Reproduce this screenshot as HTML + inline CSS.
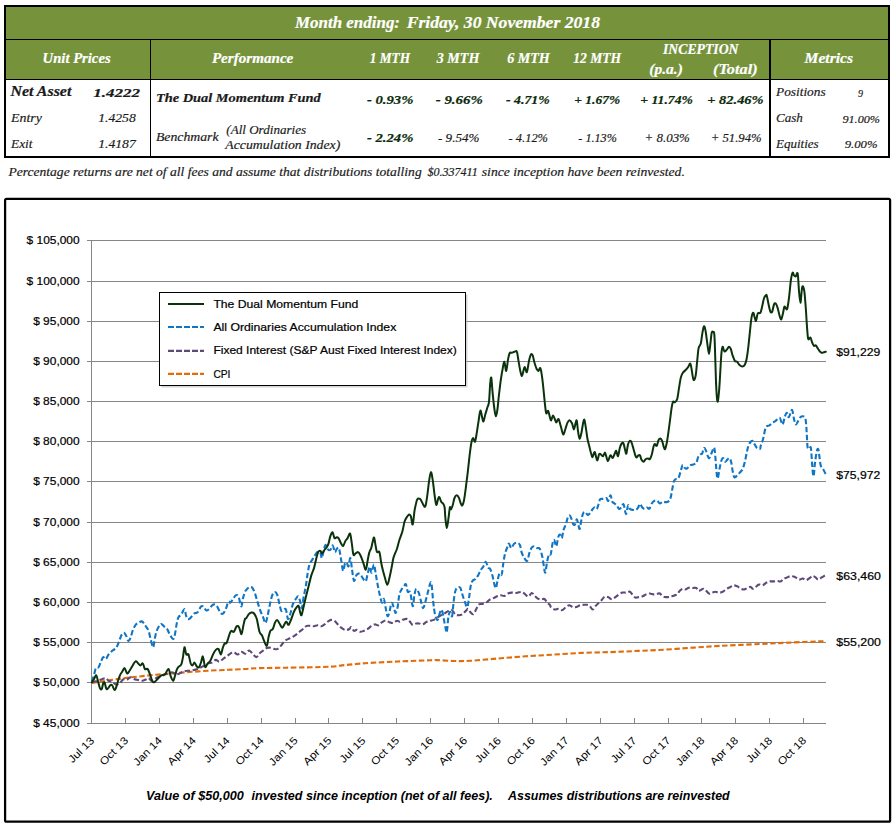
<!DOCTYPE html>
<html><head><meta charset="utf-8"><title>Fund Performance</title>
<style>
html,body{margin:0;padding:0;background:#fff;}
body{width:895px;height:826px;overflow:hidden;font-family:"Liberation Sans",sans-serif;}
svg{display:block;}
.se{font-family:"Liberation Serif",serif;font-style:italic;}
.sa{font-family:"Liberation Sans",sans-serif;}
.b{font-weight:bold;}
</style></head><body>
<svg width="895" height="826" viewBox="0 0 895 826">
<rect x="0" y="0" width="895" height="826" fill="#ffffff"/>
<g id="table" shape-rendering="crispEdges">
<rect x="5" y="6" width="884" height="151" fill="#ffffff"/>
<rect x="5" y="6" width="884" height="73.5" fill="#76933C"/>
<rect x="5" y="6" width="884" height="151" fill="none" stroke="#000" stroke-width="2"/>
<rect x="5" y="38.7" width="884" height="1.4" fill="#000"/>
<rect x="5" y="78.7" width="884" height="1.4" fill="#000"/>
<rect x="150" y="39" width="1.3" height="118" fill="#000"/>
<rect x="769.2" y="39" width="1.8" height="118" fill="#000"/>
</g>
<g id="tabletext">
<text class="se b" x="295.0" y="27.5" font-size="16" fill="#ffffff" stroke="#ffffff" stroke-width="0.2" textLength="105.0" lengthAdjust="spacingAndGlyphs" xml:space="preserve">Month ending:</text>
<text class="se b" x="406.7" y="27.5" font-size="16" fill="#ffffff" stroke="#ffffff" stroke-width="0.2" textLength="193.3" lengthAdjust="spacingAndGlyphs" xml:space="preserve">Friday, 30 November 2018</text>
<text class="se b" x="42.6" y="63.0" font-size="14.5" fill="#ffffff" stroke="#ffffff" stroke-width="0.2" textLength="68.0" lengthAdjust="spacingAndGlyphs" xml:space="preserve">Unit Prices</text>
<text class="se b" x="211.9" y="63.0" font-size="14.5" fill="#ffffff" stroke="#ffffff" stroke-width="0.2" textLength="81.4" lengthAdjust="spacingAndGlyphs" xml:space="preserve">Performance</text>
<text class="se b" x="369.8" y="63.0" font-size="14.5" fill="#ffffff" stroke="#ffffff" stroke-width="0.2" textLength="40.2" lengthAdjust="spacingAndGlyphs" xml:space="preserve">1 MTH</text>
<text class="se b" x="436.8" y="63.0" font-size="14.5" fill="#ffffff" stroke="#ffffff" stroke-width="0.2" textLength="42.6" lengthAdjust="spacingAndGlyphs" xml:space="preserve">3 MTH</text>
<text class="se b" x="507.2" y="63.0" font-size="14.5" fill="#ffffff" stroke="#ffffff" stroke-width="0.2" textLength="42.6" lengthAdjust="spacingAndGlyphs" xml:space="preserve">6 MTH</text>
<text class="se b" x="573.3" y="63.0" font-size="14.5" fill="#ffffff" stroke="#ffffff" stroke-width="0.2" textLength="47.8" lengthAdjust="spacingAndGlyphs" xml:space="preserve">12 MTH</text>
<text class="se b" x="663.0" y="53.6" font-size="14.5" fill="#ffffff" stroke="#ffffff" stroke-width="0.2" textLength="75.5" lengthAdjust="spacingAndGlyphs" xml:space="preserve">INCEPTION</text>
<text class="se b" x="649.3" y="73.7" font-size="14.5" fill="#ffffff" stroke="#ffffff" stroke-width="0.2" textLength="33.5" lengthAdjust="spacingAndGlyphs" xml:space="preserve">(p.a.)</text>
<text class="se b" x="713.0" y="73.7" font-size="14.5" fill="#ffffff" stroke="#ffffff" stroke-width="0.2" textLength="44.6" lengthAdjust="spacingAndGlyphs" xml:space="preserve">(Total)</text>
<text class="se b" x="804.5" y="63.0" font-size="14.5" fill="#ffffff" stroke="#ffffff" stroke-width="0.2" textLength="48.6" lengthAdjust="spacingAndGlyphs" xml:space="preserve">Metrics</text>
<text class="se b" x="10.4" y="96.2" font-size="14" fill="#1a1a1a" stroke="#1a1a1a" stroke-width="0.2" textLength="61.0" lengthAdjust="spacingAndGlyphs" xml:space="preserve">Net Asset</text>
<text class="se b" x="93.2" y="96.7" font-size="12.6" fill="#1a1a1a" stroke="#1a1a1a" stroke-width="0.2" textLength="46.8" lengthAdjust="spacingAndGlyphs" xml:space="preserve">1.4222</text>
<text class="se" x="11.0" y="121.8" font-size="13.5" fill="#1a1a1a" stroke="#1a1a1a" stroke-width="0.18" textLength="30.9" lengthAdjust="spacingAndGlyphs" xml:space="preserve">Entry</text>
<text class="se" x="98.2" y="122.3" font-size="12.2" fill="#1a1a1a" stroke="#1a1a1a" stroke-width="0.18" textLength="37.6" lengthAdjust="spacingAndGlyphs" xml:space="preserve">1.4258</text>
<text class="se" x="11.0" y="147.8" font-size="13.5" fill="#1a1a1a" stroke="#1a1a1a" stroke-width="0.18" textLength="21.5" lengthAdjust="spacingAndGlyphs" xml:space="preserve">Exit</text>
<text class="se" x="98.2" y="148.3" font-size="12.2" fill="#1a1a1a" stroke="#1a1a1a" stroke-width="0.18" textLength="37.6" lengthAdjust="spacingAndGlyphs" xml:space="preserve">1.4187</text>
<text class="se b" x="155.9" y="102.2" font-size="13.5" fill="#1a1a1a" stroke="#1a1a1a" stroke-width="0.2" textLength="164.9" lengthAdjust="spacingAndGlyphs" xml:space="preserve">The Dual Momentum Fund</text>
<text class="se" x="155.9" y="140.8" font-size="13" fill="#1a1a1a" stroke="#1a1a1a" stroke-width="0.18" textLength="62.7" lengthAdjust="spacingAndGlyphs" xml:space="preserve">Benchmark</text>
<text class="se" x="226.3" y="133.6" font-size="12.5" fill="#1a1a1a" stroke="#1a1a1a" stroke-width="0.18" textLength="79.8" lengthAdjust="spacingAndGlyphs" xml:space="preserve">(All Ordinaries</text>
<text class="se" x="225.3" y="148.5" font-size="12.5" fill="#1a1a1a" stroke="#1a1a1a" stroke-width="0.18" textLength="115.0" lengthAdjust="spacingAndGlyphs" xml:space="preserve">Accumulation Index)</text>
<text class="se b" x="367.0" y="103.5" font-size="12.6" fill="#0c2b0c" stroke="#0c2b0c" stroke-width="0.2" textLength="46.4" lengthAdjust="spacingAndGlyphs" xml:space="preserve">- 0.93%</text>
<text class="se b" x="435.8" y="103.5" font-size="12.6" fill="#0c2b0c" stroke="#0c2b0c" stroke-width="0.2" textLength="47.0" lengthAdjust="spacingAndGlyphs" xml:space="preserve">- 9.66%</text>
<text class="se b" x="506.0" y="103.5" font-size="12.6" fill="#0c2b0c" stroke="#0c2b0c" stroke-width="0.2" textLength="43.8" lengthAdjust="spacingAndGlyphs" xml:space="preserve">- 4.71%</text>
<text class="se b" x="574.3" y="103.5" font-size="12.6" fill="#0c2b0c" stroke="#0c2b0c" stroke-width="0.2" textLength="45.8" lengthAdjust="spacingAndGlyphs" xml:space="preserve">+ 1.67%</text>
<text class="se b" x="640.3" y="103.5" font-size="12.6" fill="#0c2b0c" stroke="#0c2b0c" stroke-width="0.2" textLength="52.6" lengthAdjust="spacingAndGlyphs" xml:space="preserve">+ 11.74%</text>
<text class="se b" x="707.3" y="103.5" font-size="12.6" fill="#0c2b0c" stroke="#0c2b0c" stroke-width="0.2" textLength="56.3" lengthAdjust="spacingAndGlyphs" xml:space="preserve">+ 82.46%</text>
<text class="se b" x="367.0" y="142.0" font-size="12.6" fill="#0c2b0c" stroke="#0c2b0c" stroke-width="0.2" textLength="46.4" lengthAdjust="spacingAndGlyphs" xml:space="preserve">- 2.24%</text>
<text class="se" x="438.0" y="142.0" font-size="12.2" fill="#1a1a1a" stroke="#1a1a1a" stroke-width="0.18" textLength="41.4" lengthAdjust="spacingAndGlyphs" xml:space="preserve">- 9.54%</text>
<text class="se" x="508.6" y="142.0" font-size="12.2" fill="#1a1a1a" stroke="#1a1a1a" stroke-width="0.18" textLength="39.4" lengthAdjust="spacingAndGlyphs" xml:space="preserve">- 4.12%</text>
<text class="se" x="578.3" y="142.0" font-size="12.2" fill="#1a1a1a" stroke="#1a1a1a" stroke-width="0.18" textLength="38.5" lengthAdjust="spacingAndGlyphs" xml:space="preserve">- 1.13%</text>
<text class="se" x="644.6" y="142.0" font-size="12.2" fill="#1a1a1a" stroke="#1a1a1a" stroke-width="0.18" textLength="45.3" lengthAdjust="spacingAndGlyphs" xml:space="preserve">+ 8.03%</text>
<text class="se" x="710.7" y="142.0" font-size="12.2" fill="#1a1a1a" stroke="#1a1a1a" stroke-width="0.18" textLength="50.9" lengthAdjust="spacingAndGlyphs" xml:space="preserve">+ 51.94%</text>
<text class="se" x="776.0" y="96.2" font-size="12.5" fill="#1a1a1a" stroke="#1a1a1a" stroke-width="0.18" textLength="49.6" lengthAdjust="spacingAndGlyphs" xml:space="preserve">Positions</text>
<text class="se" x="858.0" y="96.7" font-size="11.2" fill="#1a1a1a" stroke="#1a1a1a" stroke-width="0.18" textLength="5.0" lengthAdjust="spacingAndGlyphs" xml:space="preserve">9</text>
<text class="se" x="776.0" y="122.4" font-size="12.5" fill="#1a1a1a" stroke="#1a1a1a" stroke-width="0.18" textLength="26.8" lengthAdjust="spacingAndGlyphs" xml:space="preserve">Cash</text>
<text class="se" x="842.4" y="122.9" font-size="11.2" fill="#1a1a1a" stroke="#1a1a1a" stroke-width="0.18" textLength="37.6" lengthAdjust="spacingAndGlyphs" xml:space="preserve">91.00%</text>
<text class="se" x="776.0" y="147.6" font-size="12.5" fill="#1a1a1a" stroke="#1a1a1a" stroke-width="0.18" textLength="42.6" lengthAdjust="spacingAndGlyphs" xml:space="preserve">Equities</text>
<text class="se" x="844.7" y="148.1" font-size="11.2" fill="#1a1a1a" stroke="#1a1a1a" stroke-width="0.18" textLength="32.9" lengthAdjust="spacingAndGlyphs" xml:space="preserve">9.00%</text>
<text class="se" x="8.4" y="176.0" font-size="12.5" fill="#1a1a1a" stroke="#1a1a1a" stroke-width="0.18" textLength="413.3" lengthAdjust="spacingAndGlyphs" xml:space="preserve">Percentage returns are net of all fees and assume that distributions totalling</text>
<text class="se" x="427.4" y="176.0" font-size="11.5" fill="#1a1a1a" stroke="#1a1a1a" stroke-width="0.18" textLength="50.3" lengthAdjust="spacingAndGlyphs" xml:space="preserve">$0.337411</text>
<text class="se" x="481.8" y="176.0" font-size="12.5" fill="#1a1a1a" stroke="#1a1a1a" stroke-width="0.18" textLength="203.0" lengthAdjust="spacingAndGlyphs" xml:space="preserve">since inception have been reinvested.</text>
</g>
<g id="chart">
<rect x="5.1" y="198.8" width="885" height="622.9" rx="1.5" fill="#fff" stroke="#000" stroke-width="2.25"/>
<g stroke="#868686" stroke-width="1" shape-rendering="crispEdges">
<line x1="87.1" y1="723.5" x2="826.0" y2="723.5"/>
<line x1="87.1" y1="682.5" x2="826.0" y2="682.5"/>
<line x1="87.1" y1="642.5" x2="826.0" y2="642.5"/>
<line x1="87.1" y1="602.5" x2="826.0" y2="602.5"/>
<line x1="87.1" y1="562.5" x2="826.0" y2="562.5"/>
<line x1="87.1" y1="522.5" x2="826.0" y2="522.5"/>
<line x1="87.1" y1="481.5" x2="826.0" y2="481.5"/>
<line x1="87.1" y1="441.5" x2="826.0" y2="441.5"/>
<line x1="87.1" y1="401.5" x2="826.0" y2="401.5"/>
<line x1="87.1" y1="361.5" x2="826.0" y2="361.5"/>
<line x1="87.1" y1="321.5" x2="826.0" y2="321.5"/>
<line x1="87.1" y1="281.5" x2="826.0" y2="281.5"/>
<line x1="87.1" y1="240.5" x2="826.0" y2="240.5"/>
<line x1="91.6" y1="240.5" x2="91.6" y2="723.5"/>
<line x1="125.5" y1="718.0" x2="125.5" y2="723.5"/>
<line x1="159.5" y1="718.0" x2="159.5" y2="723.5"/>
<line x1="193.5" y1="718.0" x2="193.5" y2="723.5"/>
<line x1="227.5" y1="718.0" x2="227.5" y2="723.5"/>
<line x1="261.5" y1="718.0" x2="261.5" y2="723.5"/>
<line x1="295.5" y1="718.0" x2="295.5" y2="723.5"/>
<line x1="328.5" y1="718.0" x2="328.5" y2="723.5"/>
<line x1="362.5" y1="718.0" x2="362.5" y2="723.5"/>
<line x1="396.5" y1="718.0" x2="396.5" y2="723.5"/>
<line x1="430.5" y1="718.0" x2="430.5" y2="723.5"/>
<line x1="464.5" y1="718.0" x2="464.5" y2="723.5"/>
<line x1="498.5" y1="718.0" x2="498.5" y2="723.5"/>
<line x1="532.5" y1="718.0" x2="532.5" y2="723.5"/>
<line x1="566.5" y1="718.0" x2="566.5" y2="723.5"/>
<line x1="600.5" y1="718.0" x2="600.5" y2="723.5"/>
<line x1="634.5" y1="718.0" x2="634.5" y2="723.5"/>
<line x1="668.5" y1="718.0" x2="668.5" y2="723.5"/>
<line x1="701.5" y1="718.0" x2="701.5" y2="723.5"/>
<line x1="735.5" y1="718.0" x2="735.5" y2="723.5"/>
<line x1="769.5" y1="718.0" x2="769.5" y2="723.5"/>
<line x1="803.5" y1="718.0" x2="803.5" y2="723.5"/>
</g>
<text class="sa" x="33.2" y="727.2" font-size="10.6" fill="#000" stroke="#000" stroke-width="0.2" textLength="46.4" lengthAdjust="spacingAndGlyphs" xml:space="preserve">$ 45,000</text>
<text class="sa" x="33.2" y="686.2" font-size="10.6" fill="#000" stroke="#000" stroke-width="0.2" textLength="46.4" lengthAdjust="spacingAndGlyphs" xml:space="preserve">$ 50,000</text>
<text class="sa" x="33.2" y="646.2" font-size="10.6" fill="#000" stroke="#000" stroke-width="0.2" textLength="46.4" lengthAdjust="spacingAndGlyphs" xml:space="preserve">$ 55,000</text>
<text class="sa" x="33.2" y="606.2" font-size="10.6" fill="#000" stroke="#000" stroke-width="0.2" textLength="46.4" lengthAdjust="spacingAndGlyphs" xml:space="preserve">$ 60,000</text>
<text class="sa" x="33.2" y="566.2" font-size="10.6" fill="#000" stroke="#000" stroke-width="0.2" textLength="46.4" lengthAdjust="spacingAndGlyphs" xml:space="preserve">$ 65,000</text>
<text class="sa" x="33.2" y="526.2" font-size="10.6" fill="#000" stroke="#000" stroke-width="0.2" textLength="46.4" lengthAdjust="spacingAndGlyphs" xml:space="preserve">$ 70,000</text>
<text class="sa" x="33.2" y="485.2" font-size="10.6" fill="#000" stroke="#000" stroke-width="0.2" textLength="46.4" lengthAdjust="spacingAndGlyphs" xml:space="preserve">$ 75,000</text>
<text class="sa" x="33.2" y="445.2" font-size="10.6" fill="#000" stroke="#000" stroke-width="0.2" textLength="46.4" lengthAdjust="spacingAndGlyphs" xml:space="preserve">$ 80,000</text>
<text class="sa" x="33.2" y="405.2" font-size="10.6" fill="#000" stroke="#000" stroke-width="0.2" textLength="46.4" lengthAdjust="spacingAndGlyphs" xml:space="preserve">$ 85,000</text>
<text class="sa" x="33.2" y="365.2" font-size="10.6" fill="#000" stroke="#000" stroke-width="0.2" textLength="46.4" lengthAdjust="spacingAndGlyphs" xml:space="preserve">$ 90,000</text>
<text class="sa" x="33.2" y="325.2" font-size="10.6" fill="#000" stroke="#000" stroke-width="0.2" textLength="46.4" lengthAdjust="spacingAndGlyphs" xml:space="preserve">$ 95,000</text>
<text class="sa" x="26.6" y="285.2" font-size="10.6" fill="#000" stroke="#000" stroke-width="0.2" textLength="53.0" lengthAdjust="spacingAndGlyphs" xml:space="preserve">$ 100,000</text>
<text class="sa" x="26.6" y="244.2" font-size="10.6" fill="#000" stroke="#000" stroke-width="0.2" textLength="53.0" lengthAdjust="spacingAndGlyphs" xml:space="preserve">$ 105,000</text>
<g class="sa" font-size="10.6" fill="#000" text-anchor="end">
<text transform="translate(94.9,741.2) rotate(-45) scale(1.12,1)">Jul 13</text>
<text transform="translate(128.8,741.2) rotate(-45) scale(1.12,1)">Oct 13</text>
<text transform="translate(162.7,741.2) rotate(-45) scale(1.12,1)">Jan 14</text>
<text transform="translate(196.6,741.2) rotate(-45) scale(1.12,1)">Apr 14</text>
<text transform="translate(230.5,741.2) rotate(-45) scale(1.12,1)">Jul 14</text>
<text transform="translate(264.4,741.2) rotate(-45) scale(1.12,1)">Oct 14</text>
<text transform="translate(298.3,741.2) rotate(-45) scale(1.12,1)">Jan 15</text>
<text transform="translate(332.2,741.2) rotate(-45) scale(1.12,1)">Apr 15</text>
<text transform="translate(366.1,741.2) rotate(-45) scale(1.12,1)">Jul 15</text>
<text transform="translate(400.0,741.2) rotate(-45) scale(1.12,1)">Oct 15</text>
<text transform="translate(433.9,741.2) rotate(-45) scale(1.12,1)">Jan 16</text>
<text transform="translate(467.8,741.2) rotate(-45) scale(1.12,1)">Apr 16</text>
<text transform="translate(501.7,741.2) rotate(-45) scale(1.12,1)">Jul 16</text>
<text transform="translate(535.6,741.2) rotate(-45) scale(1.12,1)">Oct 16</text>
<text transform="translate(569.5,741.2) rotate(-45) scale(1.12,1)">Jan 17</text>
<text transform="translate(603.4,741.2) rotate(-45) scale(1.12,1)">Apr 17</text>
<text transform="translate(637.3,741.2) rotate(-45) scale(1.12,1)">Jul 17</text>
<text transform="translate(671.2,741.2) rotate(-45) scale(1.12,1)">Oct 17</text>
<text transform="translate(705.1,741.2) rotate(-45) scale(1.12,1)">Jan 18</text>
<text transform="translate(739.0,741.2) rotate(-45) scale(1.12,1)">Apr 18</text>
<text transform="translate(772.9,741.2) rotate(-45) scale(1.12,1)">Jul 18</text>
<text transform="translate(806.8,741.2) rotate(-45) scale(1.12,1)">Oct 18</text>
</g>
<path d="M91.8,683.0 C93.7,682.7 98.1,682.0 103.0,681.3 C107.9,680.6 115.1,679.4 121.0,678.6 C126.9,677.8 132.7,677.1 138.6,676.5 C144.5,675.9 150.5,675.2 156.5,674.7 C162.5,674.2 168.4,673.7 174.4,673.2 C180.4,672.7 186.4,672.2 192.3,671.8 C198.2,671.4 204.1,670.9 210.0,670.6 C215.9,670.3 222.2,670.1 228.0,669.8 C233.8,669.5 240.0,669.3 245.0,669.0 C250.0,668.7 251.2,668.4 258.0,668.2 C264.8,668.0 274.3,667.9 286.0,667.7 C297.7,667.5 318.7,667.2 328.0,666.8 C337.3,666.4 337.3,665.9 342.0,665.4 C346.7,664.9 351.3,664.4 356.0,664.0 C360.7,663.6 363.0,663.3 370.0,662.9 C377.0,662.5 388.8,661.9 398.0,661.5 C407.2,661.1 419.0,660.6 425.5,660.4 C432.0,660.2 432.3,660.0 437.0,660.1 C441.7,660.2 448.0,660.9 453.5,661.0 C459.0,661.1 462.6,661.2 470.0,660.8 C477.4,660.4 488.7,659.2 498.0,658.5 C507.3,657.8 516.7,656.9 526.0,656.3 C535.3,655.6 544.7,655.2 554.0,654.6 C563.3,654.0 572.7,653.3 582.0,652.9 C591.3,652.5 600.7,652.4 610.0,652.1 C619.3,651.8 628.8,651.3 638.0,650.9 C647.2,650.5 656.2,650.1 665.5,649.6 C674.8,649.1 684.4,648.2 693.5,647.6 C702.6,647.0 708.9,646.5 720.0,645.9 C731.1,645.3 748.3,644.5 760.0,644.0 C771.7,643.5 779.4,643.1 790.0,642.6 C800.6,642.1 817.9,641.4 823.5,641.2" fill="none" stroke="#E36C09" stroke-width="2.1" stroke-dasharray="5.4 2.6" stroke-linejoin="round"/>
<path d="M91.9,682.6 C92.6,682.4 94.3,681.8 95.9,681.3 C97.5,680.8 99.6,680.0 101.3,679.5 C103.0,679.0 104.7,677.9 105.9,678.1 C107.1,678.3 107.5,680.2 108.6,680.8 C109.6,681.4 111.0,681.1 112.2,681.7 C113.4,682.3 114.7,684.1 115.9,684.4 C117.1,684.7 118.3,684.3 119.5,683.5 C120.7,682.7 121.9,680.1 123.1,679.5 C124.3,678.9 125.6,680.3 126.8,679.9 C128.0,679.5 129.2,677.4 130.4,677.2 C131.6,677.1 132.8,678.5 134.0,679.0 C135.2,679.5 136.3,679.6 137.7,679.9 C139.1,680.2 140.8,680.9 142.2,680.8 C143.5,680.7 144.7,680.0 145.8,679.5 C146.9,679.0 147.7,677.9 148.6,678.1 C149.5,678.3 150.4,680.6 151.3,680.8 C152.2,681.0 152.9,680.1 154.0,679.5 C155.1,678.9 156.4,677.7 157.6,677.2 C158.8,676.7 160.1,676.8 161.3,676.3 C162.5,675.8 163.7,674.9 164.9,674.4 C166.1,673.9 167.3,673.9 168.5,673.5 C169.7,673.1 171.0,672.1 172.2,672.3 C173.4,672.4 174.6,674.2 175.8,674.4 C177.0,674.6 178.2,674.0 179.4,673.5 C180.6,673.0 181.9,672.2 183.1,671.7 C184.3,671.2 185.5,670.9 186.7,670.8 C187.9,670.6 189.1,670.9 190.3,670.8 C191.5,670.6 192.8,670.2 194.0,669.9 C195.2,669.6 196.4,669.5 197.6,669.0 C198.8,668.5 200.0,667.8 201.2,667.2 C202.4,666.6 203.7,666.1 204.9,665.4 C206.1,664.7 207.3,663.7 208.5,663.2 C209.7,662.7 210.9,663.2 212.1,662.6 C213.3,662.0 214.6,660.0 215.8,659.9 C217.0,659.8 218.2,661.9 219.4,661.7 C220.6,661.6 221.8,659.9 223.0,659.0 C224.2,658.1 225.5,657.2 226.7,656.3 C227.9,655.4 229.1,654.3 230.3,653.6 C231.5,652.9 232.7,652.1 233.9,652.3 C235.1,652.4 236.4,654.6 237.6,654.5 C238.8,654.4 240.0,651.9 241.2,651.7 C242.4,651.6 244.2,653.5 245.0,653.6 C245.8,653.8 245.2,653.1 245.9,652.6 C246.7,652.1 248.3,650.4 249.5,650.7 C250.7,651.0 252.0,653.3 253.2,654.4 C254.3,655.5 255.3,657.2 256.4,657.1 C257.4,657.0 258.4,654.6 259.5,653.5 C260.6,652.4 261.9,651.6 263.1,650.7 C264.3,649.8 265.6,648.5 266.8,648.0 C268.0,647.5 269.2,647.6 270.4,647.7 C271.6,647.9 272.8,648.7 274.0,648.9 C275.2,649.1 276.5,649.5 277.7,648.9 C278.9,648.3 280.1,646.6 281.3,645.3 C282.5,643.9 283.7,641.9 284.9,640.8 C286.1,639.7 287.4,639.5 288.6,638.9 C289.8,638.3 291.0,637.8 292.2,637.1 C293.4,636.4 294.6,635.8 295.8,634.9 C297.0,634.0 298.3,632.7 299.5,631.7 C300.7,630.7 301.9,630.0 303.1,629.0 C304.3,628.0 305.5,626.4 306.7,625.9 C307.9,625.4 309.2,625.8 310.4,625.9 C311.6,626.0 312.8,626.3 314.0,626.2 C315.2,626.1 316.4,625.3 317.6,625.3 C318.8,625.3 320.1,626.4 321.3,626.2 C322.5,626.0 323.7,625.0 324.9,624.1 C326.1,623.2 327.4,621.8 328.5,621.1 C329.6,620.4 330.2,619.9 331.3,619.9 C332.4,619.9 333.7,620.2 334.9,621.1 C336.1,622.0 337.3,624.1 338.5,625.3 C339.7,626.5 341.0,627.6 342.2,628.4 C343.4,629.2 344.6,630.1 345.8,630.2 C347.0,630.3 348.5,629.5 349.4,629.0 C350.3,628.5 350.4,626.8 351.2,627.1 C352.0,627.4 353.1,630.3 354.0,630.8 C354.9,631.3 355.6,629.8 356.7,629.9 C357.8,630.0 359.1,631.6 360.3,631.7 C361.5,631.9 362.7,631.2 363.9,630.8 C365.1,630.3 366.4,629.8 367.6,629.0 C368.8,628.2 370.0,627.0 371.2,626.2 C372.4,625.4 373.6,624.5 374.8,624.4 C376.0,624.2 377.3,625.7 378.5,625.3 C379.7,624.9 380.9,623.0 382.1,622.2 C383.3,621.4 384.5,620.4 385.7,620.4 C386.9,620.4 388.2,621.8 389.4,622.2 C390.6,622.6 392.1,623.1 393.0,623.0 C393.9,622.9 394.3,622.1 395.0,621.7 C395.7,621.3 396.5,620.8 397.3,620.8 C398.1,620.8 398.9,621.9 400.0,621.7 C401.1,621.5 402.4,620.0 403.6,619.5 C404.8,619.0 406.2,618.6 407.3,619.0 C408.4,619.4 409.1,620.7 410.0,621.7 C410.9,622.7 411.6,624.6 412.7,624.9 C413.8,625.2 415.2,623.7 416.3,623.5 C417.4,623.3 418.0,623.4 419.1,623.5 C420.2,623.6 421.5,624.6 422.7,624.4 C423.9,624.1 425.1,622.6 426.3,622.0 C427.5,621.4 428.8,621.1 430.0,620.8 C431.2,620.4 432.4,620.4 433.6,619.9 C434.8,619.4 436.0,618.5 437.2,617.7 C438.4,616.9 439.7,616.0 440.9,615.3 C442.1,614.6 443.3,614.2 444.5,613.5 C445.7,612.8 446.9,611.7 448.1,611.1 C449.3,610.5 450.5,609.4 451.7,609.9 C452.9,610.4 454.2,613.5 455.4,614.4 C456.6,615.3 457.8,615.3 459.0,615.3 C460.2,615.2 461.4,614.9 462.6,614.1 C463.8,613.3 465.4,611.2 466.3,610.4 C467.2,609.5 467.4,608.6 468.1,609.0 C468.9,609.4 469.9,611.8 470.8,612.6 C471.7,613.5 472.6,614.7 473.5,614.1 C474.4,613.5 475.4,610.6 476.3,609.0 C477.2,607.4 477.9,605.2 479.0,604.4 C480.1,603.5 481.4,604.2 482.6,603.9 C483.8,603.6 485.1,603.3 486.3,602.6 C487.5,601.9 488.7,600.2 489.9,599.5 C491.1,598.8 492.3,598.6 493.5,598.1 C494.7,597.6 496.0,596.8 497.2,596.3 C498.4,595.8 499.6,595.4 500.8,595.3 C502.0,595.2 503.2,596.2 504.4,595.9 C505.6,595.6 506.8,594.0 508.0,593.5 C509.2,593.0 510.5,592.7 511.7,592.6 C512.9,592.5 514.1,593.0 515.3,593.0 C516.5,593.0 517.7,592.4 518.9,592.3 C520.1,592.2 521.4,591.8 522.6,592.3 C523.8,592.8 525.2,594.6 526.2,595.3 C527.2,596.0 528.0,596.7 528.9,596.3 C529.8,595.9 530.8,593.2 531.7,593.0 C532.6,592.8 533.5,594.4 534.4,595.3 C535.3,596.1 536.0,597.4 537.1,598.1 C538.2,598.8 539.5,599.4 540.7,599.5 C541.9,599.6 543.3,598.5 544.4,599.0 C545.5,599.5 546.2,601.6 547.1,602.6 C548.0,603.6 549.4,604.2 550.0,605.0 C550.6,605.8 550.1,606.4 550.9,607.1 C551.6,607.9 553.3,609.2 554.5,609.5 C555.7,609.8 557.0,608.8 558.2,608.9 C559.4,609.0 560.6,610.4 561.8,610.2 C563.0,610.0 564.2,608.5 565.4,607.7 C566.6,606.9 567.9,605.4 569.1,605.3 C570.3,605.2 571.5,606.8 572.7,607.1 C573.9,607.4 575.1,607.4 576.3,607.1 C577.5,606.8 578.8,605.7 580.0,605.3 C581.2,604.9 582.4,604.9 583.6,604.8 C584.8,604.7 586.2,604.6 587.2,604.8 C588.2,605.0 589.0,605.4 589.9,606.2 C590.8,607.0 591.8,609.5 592.7,609.5 C593.6,609.5 594.5,607.2 595.4,606.2 C596.3,605.2 597.0,604.5 598.1,603.5 C599.2,602.5 600.6,601.0 601.7,599.9 C602.8,598.8 603.4,597.3 604.5,596.8 C605.6,596.3 606.9,596.7 608.1,597.1 C609.3,597.5 610.5,599.3 611.7,599.3 C612.9,599.3 614.2,597.9 615.4,597.1 C616.6,596.3 617.8,595.1 619.0,594.4 C620.2,593.6 621.4,592.9 622.6,592.6 C623.8,592.3 625.1,592.8 626.3,592.6 C627.5,592.5 628.8,591.3 629.9,591.7 C631.0,592.1 631.7,593.9 632.6,594.9 C633.5,595.9 634.2,597.1 635.3,597.5 C636.4,597.9 637.8,597.3 639.0,597.1 C640.2,596.9 641.4,596.7 642.6,596.2 C643.8,595.8 645.0,594.9 646.2,594.4 C647.4,593.9 648.7,593.5 649.9,593.5 C651.1,593.5 652.3,594.3 653.5,594.4 C654.7,594.5 656.0,594.0 657.1,593.9 C658.2,593.8 659.0,593.1 659.9,593.5 C660.8,593.9 661.5,595.6 662.6,596.2 C663.7,596.8 665.0,597.0 666.2,597.1 C667.4,597.2 668.7,597.0 669.9,596.8 C671.1,596.6 672.3,596.1 673.5,595.7 C674.7,595.3 676.1,595.2 677.1,594.4 C678.1,593.6 678.9,591.7 679.8,590.8 C680.7,589.9 681.7,589.2 682.6,589.0 C683.5,588.8 684.2,589.7 685.3,589.5 C686.3,589.3 687.7,588.0 688.9,587.7 C690.1,587.5 691.4,588.0 692.6,588.0 C693.8,588.0 695.2,587.5 696.2,588.0 C697.2,588.5 697.6,590.5 698.4,590.8 C699.2,591.1 700.0,590.2 700.9,589.9 C701.8,589.5 702.7,588.5 703.6,588.7 C704.5,588.9 705.4,590.1 706.3,590.9 C707.2,591.7 708.2,593.3 709.1,593.6 C710.0,593.9 710.8,593.0 711.8,592.7 C712.8,592.4 714.2,591.8 715.4,591.8 C716.6,591.8 717.9,592.7 719.1,592.7 C720.3,592.7 721.5,592.4 722.7,591.8 C723.9,591.2 725.1,589.8 726.3,589.0 C727.5,588.2 728.8,587.8 730.0,587.2 C731.2,586.6 732.4,585.5 733.6,585.4 C734.8,585.2 736.0,585.8 737.2,586.3 C738.4,586.8 739.7,588.2 740.9,588.7 C742.1,589.2 743.3,589.6 744.5,589.4 C745.7,589.2 747.1,588.0 748.1,587.6 C749.1,587.2 750.0,586.7 750.8,586.9 C751.6,587.1 751.9,588.7 752.7,588.7 C753.5,588.8 754.4,587.9 755.4,587.2 C756.4,586.5 757.8,584.8 759.0,584.5 C760.2,584.2 761.4,585.7 762.6,585.4 C763.8,585.1 765.1,583.4 766.3,582.7 C767.5,582.0 768.7,581.6 769.9,581.4 C771.1,581.2 772.3,581.5 773.5,581.4 C774.7,581.3 776.0,580.9 777.2,580.9 C778.4,580.9 779.8,581.7 780.8,581.4 C781.8,581.1 782.6,579.6 783.5,579.0 C784.4,578.4 785.2,578.2 786.3,577.8 C787.4,577.3 788.8,576.5 789.9,576.3 C791.0,576.0 791.7,576.1 792.6,576.3 C793.5,576.4 794.2,576.7 795.3,577.2 C796.4,577.8 797.8,579.4 799.0,579.6 C800.2,579.8 801.4,578.4 802.6,578.5 C803.8,578.6 805.0,580.1 806.2,580.0 C807.4,579.9 808.8,578.5 809.9,577.8 C811.0,577.1 811.7,576.1 812.6,576.0 C813.5,575.9 814.4,576.6 815.3,577.2 C816.2,577.8 817.1,579.5 818.0,579.6 C818.9,579.8 819.9,578.7 820.8,578.1 C821.7,577.5 822.7,576.8 823.5,576.3 C824.3,575.8 825.4,575.1 825.8,574.9" fill="none" stroke="#5F497A" stroke-width="2.1" stroke-dasharray="5.4 2.6" stroke-linejoin="round"/>
<path d="M91.9,681.7 C92.3,680.5 93.4,676.7 94.1,674.4 C94.8,672.1 95.2,669.3 95.9,668.1 C96.7,666.9 97.8,668.3 98.6,667.2 C99.4,666.1 100.2,663.4 101.0,661.7 C101.8,660.0 102.4,657.7 103.2,657.2 C104.0,656.8 105.0,659.5 105.9,659.0 C106.8,658.5 107.5,655.9 108.6,654.5 C109.6,653.1 111.0,651.9 112.2,650.8 C113.4,649.7 114.8,649.5 115.9,648.1 C117.0,646.8 117.7,644.8 118.6,642.7 C119.5,640.6 120.4,637.1 121.3,635.4 C122.2,633.7 123.2,632.6 124.0,632.7 C124.8,632.9 125.7,634.9 126.4,636.3 C127.1,637.6 127.5,640.5 128.2,640.8 C128.9,641.1 129.7,639.8 130.4,638.1 C131.1,636.5 131.8,633.1 132.6,630.9 C133.4,628.7 134.5,626.4 135.5,625.0 C136.5,623.6 137.6,623.3 138.6,622.7 C139.6,622.1 140.8,621.2 141.7,621.4 C142.6,621.5 143.2,622.6 144.0,623.6 C144.8,624.6 145.9,626.4 146.7,627.6 C147.5,628.8 148.0,629.1 148.6,630.9 C149.2,632.6 149.7,635.4 150.4,638.1 C151.2,640.8 152.3,647.2 153.1,647.2 C153.8,647.2 154.3,640.8 154.9,638.1 C155.5,635.4 155.9,633.0 156.7,630.9 C157.5,628.8 158.7,626.5 159.5,625.4 C160.3,624.2 160.6,623.9 161.3,624.0 C162.1,624.1 163.1,625.6 164.0,626.3 C164.9,627.0 165.8,626.9 166.7,628.1 C167.6,629.3 168.3,631.8 169.4,633.6 C170.5,635.4 172.2,638.9 173.1,639.0 C174.0,639.1 174.3,637.1 174.9,634.5 C175.5,631.9 176.1,626.5 176.7,623.6 C177.3,620.7 177.7,618.7 178.5,617.2 C179.3,615.7 180.3,615.9 181.3,614.5 C182.3,613.1 183.7,609.0 184.5,609.1 C185.3,609.2 185.5,613.8 186.0,615.4 C186.5,617.0 186.9,618.5 187.6,619.0 C188.3,619.5 189.2,619.0 190.3,618.1 C191.4,617.2 192.8,614.6 194.0,613.6 C195.2,612.6 196.4,613.5 197.6,612.3 C198.8,611.1 200.1,607.1 201.2,606.3 C202.3,605.4 203.2,606.5 204.0,607.2 C204.8,607.9 205.4,610.2 206.3,610.5 C207.2,610.8 208.4,609.6 209.4,608.7 C210.4,607.9 211.2,606.1 212.1,605.4 C213.0,604.7 214.0,604.2 214.9,604.5 C215.8,604.8 216.7,605.8 217.6,607.2 C218.5,608.6 219.4,611.6 220.3,612.7 C221.2,613.8 222.1,614.2 223.0,613.6 C223.9,613.0 224.8,611.1 225.7,609.1 C226.6,607.1 227.7,602.9 228.5,601.8 C229.3,600.7 229.6,603.2 230.3,602.7 C231.1,602.2 232.1,600.3 233.0,599.1 C233.9,597.9 234.8,595.9 235.7,595.4 C236.6,594.9 237.6,594.5 238.5,596.3 C239.4,598.1 240.4,606.0 241.2,606.3 C241.9,606.6 242.4,600.6 243.0,598.2 C243.6,595.8 244.4,593.2 245.0,591.8 C245.6,590.4 245.6,590.7 246.3,589.9 C247.0,589.1 248.2,587.6 249.2,587.2 C250.2,586.8 251.3,586.7 252.3,587.7 C253.3,588.8 254.1,591.0 255.0,593.5 C255.9,596.0 256.8,599.7 257.7,602.6 C258.6,605.5 259.5,608.4 260.4,610.8 C261.3,613.2 262.2,615.2 263.1,617.2 C264.0,619.2 264.7,623.3 265.5,623.0 C266.3,622.7 267.0,618.4 267.7,615.3 C268.4,612.2 269.1,607.7 269.9,604.4 C270.6,601.1 271.4,597.4 272.2,595.4 C273.0,593.4 273.8,592.3 274.6,592.1 C275.4,591.9 276.3,592.4 277.1,594.4 C277.9,596.4 278.8,601.7 279.5,604.4 C280.2,607.1 280.6,609.9 281.3,610.8 C282.0,611.7 282.9,610.1 283.7,609.9 C284.5,609.7 285.2,608.0 285.9,609.5 C286.6,611.0 287.2,618.3 288.0,619.0 C288.8,619.7 289.6,615.9 290.4,613.5 C291.2,611.1 291.9,606.8 292.8,604.4 C293.7,602.0 294.9,600.4 295.8,599.0 C296.7,597.6 297.5,596.0 298.2,596.3 C298.9,596.6 299.4,598.8 300.0,600.8 C300.6,602.8 301.2,608.7 301.8,608.1 C302.4,607.5 302.9,600.8 303.6,597.2 C304.3,593.6 305.1,590.2 305.8,586.3 C306.5,582.4 307.0,577.2 307.6,573.6 C308.2,570.0 308.7,566.8 309.5,564.5 C310.3,562.2 311.3,561.4 312.2,559.9 C313.1,558.4 314.0,556.8 314.9,555.4 C315.8,554.0 316.7,552.2 317.6,551.8 C318.5,551.3 319.7,551.7 320.4,552.7 C321.1,553.8 321.3,558.4 321.8,558.1 C322.3,557.8 323.0,553.1 323.6,550.9 C324.2,548.7 324.7,545.2 325.4,544.9 C326.1,544.6 326.8,548.1 327.6,549.0 C328.4,549.9 329.5,550.6 330.3,550.0 C331.1,549.4 331.9,545.0 332.7,545.4 C333.5,545.8 334.2,551.5 334.9,552.1 C335.6,552.7 336.0,549.7 336.7,549.0 C337.4,548.3 338.2,546.7 338.9,548.1 C339.6,549.5 340.0,553.4 340.7,557.2 C341.4,561.0 342.4,569.7 343.1,570.8 C343.8,571.9 344.3,565.0 344.9,563.6 C345.5,562.2 346.1,562.2 346.7,562.7 C347.3,563.2 347.9,567.1 348.5,566.3 C349.1,565.5 349.7,557.5 350.3,558.1 C350.9,558.7 351.5,566.1 352.1,569.9 C352.7,573.7 353.3,579.9 354.0,580.8 C354.7,581.7 355.6,576.6 356.3,575.4 C357.1,574.2 357.8,573.8 358.5,573.6 C359.2,573.5 359.9,573.7 360.7,574.5 C361.4,575.3 362.1,577.5 363.0,578.6 C363.9,579.7 365.0,582.2 365.8,581.2 C366.6,580.2 367.2,575.1 367.9,572.7 C368.6,570.3 369.2,566.7 369.8,566.7 C370.4,566.7 370.9,573.1 371.6,572.7 C372.3,572.3 373.2,564.4 373.9,564.5 C374.6,564.6 375.1,570.3 375.7,573.6 C376.3,576.9 376.9,580.9 377.6,584.5 C378.3,588.1 379.1,592.4 379.9,595.4 C380.6,598.4 381.4,602.0 382.1,602.6 C382.8,603.2 383.3,598.1 383.9,599.0 C384.5,599.9 385.1,605.2 385.7,608.1 C386.3,611.0 386.9,615.8 387.6,616.2 C388.3,616.7 389.1,613.0 389.7,610.8 C390.3,608.6 390.9,603.8 391.5,603.0 C392.1,602.2 392.8,604.8 393.4,606.3 C394.0,607.8 394.6,610.7 395.0,611.7 C395.4,612.8 395.4,613.4 395.8,612.6 C396.2,611.9 397.0,610.2 397.6,607.2 C398.2,604.2 398.7,597.4 399.4,594.4 C400.1,591.4 400.9,590.5 401.8,589.0 C402.7,587.5 403.8,586.2 404.5,585.4 C405.2,584.6 405.4,583.3 406.0,584.4 C406.6,585.5 407.1,590.3 407.8,591.7 C408.5,593.1 409.5,590.2 410.3,592.6 C411.1,595.0 412.0,605.9 412.7,606.2 C413.4,606.5 413.9,597.3 414.5,594.4 C415.1,591.5 415.6,589.3 416.3,589.0 C417.0,588.7 417.9,590.6 418.7,592.6 C419.5,594.6 420.2,598.2 420.9,600.8 C421.6,603.4 422.4,608.0 423.1,608.1 C423.9,608.2 424.6,604.3 425.4,601.7 C426.2,599.1 427.1,595.3 427.8,592.6 C428.5,589.9 429.0,587.0 429.6,585.4 C430.2,583.8 430.8,580.5 431.4,583.2 C432.0,585.9 432.6,596.5 433.2,601.7 C433.8,606.9 434.3,611.4 435.0,614.4 C435.7,617.4 436.8,620.2 437.6,619.9 C438.4,619.6 439.2,614.3 439.9,612.6 C440.6,610.9 441.2,609.0 441.8,609.9 C442.4,610.8 443.0,615.1 443.6,618.0 C444.2,620.9 444.9,624.7 445.4,627.1 C445.9,629.5 446.3,634.0 446.8,632.2 C447.3,630.4 447.9,619.6 448.5,616.2 C449.1,612.8 449.7,611.7 450.3,611.7 C450.9,611.7 451.6,617.9 452.1,616.2 C452.7,614.5 453.1,605.9 453.6,601.7 C454.2,597.5 454.6,593.2 455.4,590.8 C456.1,588.4 457.2,587.7 458.1,587.2 C459.0,586.8 459.8,586.8 460.5,588.1 C461.2,589.5 461.9,593.0 462.6,595.3 C463.3,597.6 464.0,599.7 464.8,601.7 C465.6,603.7 466.5,607.8 467.2,607.2 C467.9,606.6 468.4,601.7 469.0,598.1 C469.6,594.5 470.2,588.3 470.8,585.4 C471.4,582.5 471.8,581.9 472.6,580.8 C473.4,579.7 474.5,579.9 475.4,579.0 C476.3,578.1 477.2,576.9 478.1,575.4 C479.0,573.9 479.9,571.4 480.8,569.9 C481.7,568.4 482.7,567.7 483.5,566.3 C484.3,564.9 484.9,561.5 485.7,561.7 C486.5,561.9 487.4,566.4 488.1,567.6 C488.9,568.8 489.4,567.5 490.2,569.0 C490.9,570.5 491.9,573.7 492.6,576.3 C493.3,578.9 493.8,582.4 494.4,584.4 C494.9,586.4 495.3,588.9 495.9,588.1 C496.4,587.4 497.1,582.3 497.7,579.9 C498.3,577.5 498.8,574.5 499.5,573.6 C500.2,572.7 501.0,576.5 501.7,574.5 C502.4,572.5 502.9,565.3 503.5,561.7 C504.1,558.1 504.6,555.3 505.3,552.7 C506.0,550.1 507.1,547.8 507.7,546.3 C508.3,544.8 508.4,543.3 509.0,543.6 C509.6,543.9 510.5,548.0 511.3,548.1 C512.1,548.2 512.9,544.9 513.9,544.0 C514.9,543.1 516.1,542.5 517.1,542.7 C518.1,542.9 519.1,543.3 519.9,545.0 C520.7,546.7 521.0,550.5 521.7,552.7 C522.5,554.9 523.5,556.8 524.4,558.1 C525.3,559.5 526.2,561.7 527.1,560.8 C528.0,559.9 528.7,554.9 529.5,552.7 C530.3,550.5 530.9,548.7 531.7,547.6 C532.5,546.5 533.5,546.2 534.4,546.3 C535.3,546.4 536.2,547.7 537.1,548.1 C538.0,548.5 538.9,547.3 539.8,548.7 C540.6,550.1 541.5,553.2 542.2,556.3 C542.9,559.4 543.5,564.5 544.0,567.2 C544.5,569.9 544.8,573.5 545.3,572.6 C545.8,571.7 546.5,564.7 547.1,561.7 C547.7,558.7 548.4,555.7 548.9,554.5 C549.4,553.3 549.7,554.7 550.0,554.5 C550.3,554.3 550.4,555.5 550.9,553.5 C551.4,551.5 552.2,544.9 552.7,542.6 C553.2,540.3 553.6,539.3 554.2,539.9 C554.8,540.5 555.6,546.8 556.3,546.3 C557.0,545.8 557.6,539.2 558.2,537.2 C558.8,535.2 559.4,534.4 560.0,534.5 C560.6,534.6 561.2,538.9 561.8,538.1 C562.4,537.3 562.9,532.2 563.6,529.9 C564.3,527.6 565.1,526.5 565.8,524.5 C566.5,522.5 567.0,519.6 567.6,518.1 C568.2,516.6 568.8,515.4 569.4,515.4 C570.0,515.4 570.6,516.6 571.2,518.1 C571.8,519.6 572.5,523.0 573.1,524.1 C573.7,525.2 574.3,525.3 574.9,524.5 C575.5,523.7 576.2,519.5 576.7,519.4 C577.2,519.2 577.6,522.0 578.1,523.6 C578.6,525.2 579.1,529.6 579.6,529.0 C580.1,528.4 580.8,522.5 581.4,519.9 C582.0,517.3 582.5,514.5 583.2,513.2 C583.9,511.9 584.7,511.8 585.4,512.1 C586.1,512.4 586.9,514.8 587.6,515.0 C588.4,515.2 589.0,514.2 589.9,513.2 C590.8,512.2 591.9,510.0 592.7,509.0 C593.5,508.0 594.1,507.2 594.8,507.2 C595.5,507.2 596.1,509.4 596.7,509.0 C597.3,508.6 597.9,506.1 598.5,504.5 C599.1,502.9 599.4,500.0 600.3,499.1 C601.1,498.2 602.6,499.2 603.6,499.0 C604.6,498.8 605.6,497.8 606.4,498.1 C607.2,498.4 607.5,501.3 608.2,500.8 C608.9,500.3 609.8,495.2 610.5,495.3 C611.2,495.4 611.6,500.3 612.3,501.7 C613.0,503.1 613.8,502.9 614.5,503.5 C615.2,504.1 615.9,504.4 616.7,505.3 C617.5,506.2 618.3,508.7 619.1,509.0 C619.9,509.3 620.6,508.0 621.4,507.2 C622.1,506.4 622.8,503.2 623.6,504.4 C624.4,505.5 625.2,514.0 626.0,514.1 C626.8,514.2 627.4,506.2 628.1,505.3 C628.8,504.4 629.2,508.2 630.0,509.0 C630.8,509.8 631.8,509.8 632.7,509.9 C633.6,510.0 634.5,510.2 635.4,509.9 C636.2,509.6 637.0,509.1 637.8,508.1 C638.6,507.1 639.3,504.0 640.0,503.9 C640.7,503.8 641.4,506.3 642.1,507.2 C642.9,508.1 643.7,508.9 644.5,509.0 C645.3,509.1 646.1,507.6 646.9,507.5 C647.7,507.4 648.6,509.3 649.4,508.6 C650.2,507.9 650.9,504.8 651.8,503.5 C652.6,502.2 653.6,501.2 654.5,500.8 C655.4,500.4 656.3,500.4 657.2,500.8 C658.1,501.2 659.0,503.4 659.9,503.5 C660.8,503.6 661.8,501.9 662.7,501.7 C663.6,501.5 664.5,502.1 665.4,502.1 C666.3,502.1 667.2,502.4 668.1,501.7 C669.0,501.0 669.8,500.2 670.5,498.1 C671.2,496.0 671.7,491.9 672.3,489.0 C672.9,486.1 673.4,482.5 674.1,480.8 C674.8,479.1 675.6,479.4 676.3,479.0 C677.0,478.6 677.8,479.5 678.5,478.1 C679.2,476.7 680.1,473.0 680.8,470.8 C681.5,468.6 682.0,465.5 682.6,465.0 C683.2,464.5 683.7,467.0 684.4,467.6 C685.1,468.2 685.9,469.0 686.8,468.6 C687.7,468.2 688.8,466.1 689.9,465.4 C691.0,464.7 692.4,464.9 693.5,464.5 C694.6,464.1 695.5,463.9 696.3,462.7 C697.1,461.5 697.5,458.6 698.1,457.2 C698.7,455.8 699.2,455.1 699.9,454.5 C700.6,453.9 701.4,454.7 702.1,453.6 C702.8,452.5 703.3,448.7 703.9,448.1 C704.5,447.5 705.1,448.7 705.7,449.9 C706.3,451.1 706.9,454.0 707.5,455.4 C708.1,456.8 708.6,458.6 709.3,458.1 C710.0,457.7 710.9,454.4 711.7,452.7 C712.5,450.9 713.5,447.0 714.1,447.6 C714.7,448.2 714.9,452.1 715.3,456.3 C715.7,460.5 716.2,468.9 716.6,472.6 C717.0,476.3 717.2,479.1 717.7,478.5 C718.2,477.9 718.9,471.9 719.5,469.0 C720.1,466.1 720.7,462.6 721.3,460.8 C721.9,459.0 722.4,458.0 723.1,458.1 C723.8,458.2 724.6,461.4 725.3,461.7 C726.0,462.0 726.4,460.5 727.1,459.9 C727.8,459.3 728.6,457.8 729.3,458.1 C730.0,458.4 730.5,459.6 731.1,461.7 C731.7,463.8 732.1,468.2 732.6,470.8 C733.1,473.4 733.6,476.4 734.4,477.2 C735.1,478.0 736.2,476.2 737.1,475.4 C738.0,474.6 738.9,473.7 739.8,472.6 C740.7,471.5 741.8,470.8 742.6,469.0 C743.5,467.2 744.2,464.4 744.9,461.7 C745.6,459.0 746.1,455.4 746.7,452.7 C747.3,450.0 747.9,447.2 748.6,445.4 C749.3,443.6 750.0,442.6 750.7,441.8 C751.4,441.1 752.2,440.4 752.9,440.9 C753.6,441.3 754.0,443.3 754.7,444.5 C755.4,445.7 756.2,447.4 757.1,448.1 C758.0,448.9 759.4,449.4 760.0,449.0 C760.6,448.6 760.3,447.1 760.8,445.4 C761.3,443.7 762.4,441.6 763.1,439.0 C763.8,436.4 764.4,432.0 765.0,429.9 C765.6,427.8 766.0,427.1 766.8,426.3 C767.5,425.6 768.6,426.0 769.5,425.4 C770.4,424.8 771.3,423.4 772.2,422.7 C773.1,422.0 774.1,422.0 775.0,421.4 C775.9,420.8 776.9,419.6 777.7,419.0 C778.5,418.4 779.2,417.2 780.0,418.1 C780.8,419.0 781.8,424.8 782.6,424.5 C783.4,424.2 784.2,418.3 784.9,416.3 C785.6,414.3 786.2,412.6 786.8,412.7 C787.4,412.8 788.0,417.0 788.6,417.2 C789.2,417.4 789.8,414.8 790.4,413.6 C791.0,412.4 791.6,409.1 792.2,410.0 C792.8,410.9 793.4,416.6 794.0,419.0 C794.6,421.4 795.1,424.2 795.8,424.5 C796.5,424.8 797.4,422.1 798.2,420.9 C799.0,419.7 799.6,418.0 800.4,417.2 C801.2,416.4 802.2,416.0 803.1,416.3 C804.0,416.6 804.9,416.3 805.5,419.0 C806.1,421.7 806.4,428.0 806.7,432.7 C807.1,437.4 807.1,444.5 807.6,447.2 C808.1,449.9 809.0,448.5 809.5,448.6 C810.0,448.8 810.4,445.3 810.9,448.1 C811.4,450.9 811.8,460.7 812.2,465.4 C812.6,470.1 813.0,476.6 813.5,476.3 C814.0,476.0 814.4,467.6 814.9,463.5 C815.4,459.4 816.2,454.1 816.7,451.7 C817.2,449.3 817.8,448.2 818.2,449.0 C818.7,449.8 819.0,453.6 819.4,456.3 C819.8,459.0 820.1,463.3 820.7,465.4 C821.3,467.5 822.2,467.5 823.1,469.0 C824.0,470.5 825.3,473.5 825.8,474.4" fill="none" stroke="#0F75C5" stroke-width="2.1" stroke-dasharray="5.4 2.6" stroke-linejoin="round"/>
<path d="M91.9,682.2 C92.3,681.7 93.4,680.1 94.1,679.0 C94.8,677.9 95.6,674.8 96.3,675.3 C97.0,675.8 97.5,679.6 98.1,681.7 C98.7,683.8 99.3,686.9 99.9,688.1 C100.5,689.3 101.2,689.8 101.7,689.0 C102.2,688.2 102.7,684.6 103.2,683.5 C103.7,682.4 104.1,681.7 104.6,682.6 C105.1,683.5 105.8,688.1 106.4,689.0 C107.0,689.9 107.5,688.8 108.2,688.1 C108.9,687.4 109.7,685.5 110.4,685.0 C111.1,684.5 111.5,684.5 112.2,685.3 C112.9,686.1 113.7,689.6 114.4,689.9 C115.1,690.2 115.5,689.0 116.2,687.2 C116.9,685.4 117.9,681.1 118.6,679.0 C119.3,676.9 119.8,675.6 120.4,674.4 C121.0,673.2 121.5,672.8 122.2,671.7 C122.9,670.7 123.8,667.8 124.6,668.1 C125.4,668.4 126.3,673.0 127.1,673.5 C127.9,674.0 128.7,672.0 129.5,670.8 C130.3,669.6 131.2,667.9 132.2,666.3 C133.2,664.7 134.5,661.9 135.5,661.4 C136.5,660.9 137.2,662.5 138.0,663.2 C138.8,663.9 139.6,665.4 140.4,665.4 C141.2,665.4 142.1,662.9 142.8,663.5 C143.6,664.1 144.1,668.1 144.9,669.0 C145.7,669.9 146.8,668.1 147.7,669.0 C148.5,669.9 149.2,672.3 150.0,674.4 C150.8,676.5 151.8,680.5 152.6,681.7 C153.4,682.9 154.1,682.2 154.9,681.7 C155.7,681.2 156.5,680.1 157.6,679.0 C158.7,677.9 160.1,676.1 161.3,675.3 C162.5,674.5 163.7,675.4 164.9,674.4 C166.1,673.4 167.5,668.7 168.5,669.0 C169.5,669.3 169.9,674.3 170.7,676.3 C171.5,678.3 172.4,680.8 173.1,680.8 C173.8,680.8 174.3,678.1 174.9,676.3 C175.5,674.5 176.1,671.5 176.7,669.9 C177.3,668.3 177.7,667.7 178.5,666.8 C179.3,665.9 180.5,666.1 181.3,664.4 C182.1,662.6 182.6,659.2 183.1,656.3 C183.6,653.4 184.0,647.5 184.5,647.2 C185.0,646.9 185.6,653.3 186.3,654.5 C187.0,655.7 187.8,653.0 188.5,654.5 C189.2,656.0 190.0,661.7 190.7,663.5 C191.4,665.3 191.9,665.5 192.5,665.4 C193.1,665.2 193.8,662.5 194.5,662.6 C195.2,662.8 195.9,665.5 196.7,666.3 C197.5,667.1 198.3,668.0 199.1,667.2 C199.8,666.4 200.6,663.5 201.2,661.7 C201.8,659.9 202.2,656.3 202.7,656.3 C203.2,656.3 203.6,659.9 204.0,661.7 C204.4,663.5 204.6,666.9 205.2,667.2 C205.8,667.5 206.8,664.6 207.6,663.5 C208.4,662.4 209.4,662.3 210.3,660.8 C211.2,659.3 212.1,656.3 213.0,654.5 C213.9,652.7 214.9,650.8 215.8,649.9 C216.7,649.0 217.7,648.2 218.5,649.0 C219.3,649.8 220.1,654.6 220.8,654.5 C221.5,654.4 222.1,649.9 222.7,648.1 C223.3,646.3 223.8,644.5 224.5,643.6 C225.2,642.7 225.9,644.2 226.7,642.7 C227.5,641.2 228.7,636.5 229.4,634.5 C230.2,632.5 230.4,631.4 231.2,630.9 C231.9,630.4 233.0,632.6 233.9,631.8 C234.8,631.0 235.8,627.1 236.6,626.3 C237.4,625.5 238.2,625.9 239.0,627.2 C239.8,628.5 240.8,634.4 241.5,634.1 C242.2,633.8 242.8,627.9 243.4,625.4 C244.0,622.9 244.5,620.2 245.0,619.0 C245.5,617.8 245.7,618.9 246.3,618.1 C246.9,617.3 247.8,615.3 248.6,614.4 C249.4,613.5 250.4,612.8 251.3,612.6 C252.2,612.5 253.2,612.4 254.1,613.5 C255.0,614.6 255.9,616.0 256.8,619.0 C257.7,622.0 258.6,629.0 259.5,631.7 C260.4,634.4 261.1,633.8 261.9,635.3 C262.7,636.8 263.3,639.0 264.1,640.8 C264.9,642.5 266.1,646.4 266.8,645.8 C267.6,645.2 268.0,639.6 268.6,637.1 C269.2,634.6 269.7,632.1 270.4,630.8 C271.1,629.4 272.0,630.4 272.8,629.0 C273.6,627.6 274.3,624.1 275.0,622.6 C275.7,621.1 276.4,619.8 277.1,619.9 C277.9,620.0 278.6,622.2 279.5,623.5 C280.4,624.8 281.3,627.7 282.2,627.7 C283.1,627.7 284.2,624.5 284.9,623.5 C285.6,622.5 285.8,621.5 286.4,621.7 C287.0,621.9 287.8,625.2 288.6,624.8 C289.4,624.3 290.4,621.2 291.3,619.0 C292.2,616.8 293.1,613.7 294.0,611.7 C294.9,609.7 295.9,608.2 296.7,607.2 C297.5,606.2 298.1,605.1 298.6,605.9 C299.2,606.6 299.5,610.1 300.0,611.7 C300.5,613.3 301.0,615.8 301.5,615.3 C302.0,614.8 302.4,612.0 303.1,609.0 C303.8,606.0 304.9,601.0 305.8,597.2 C306.7,593.4 307.7,589.9 308.6,586.3 C309.5,582.7 310.4,578.4 311.3,575.4 C312.2,572.4 313.1,571.0 314.0,568.1 C314.9,565.2 315.7,560.8 316.4,558.1 C317.1,555.4 317.5,553.3 318.2,552.1 C318.9,550.9 319.7,550.6 320.4,550.9 C321.1,551.1 321.5,553.8 322.2,553.6 C322.9,553.5 323.6,551.1 324.4,550.0 C325.1,548.9 326.0,548.3 326.7,547.2 C327.4,546.1 327.9,545.4 328.5,543.6 C329.1,541.8 329.6,538.2 330.3,536.3 C331.0,534.4 331.8,531.9 332.5,532.2 C333.2,532.5 333.8,537.3 334.5,538.1 C335.2,538.9 336.0,537.2 336.7,537.2 C337.4,537.2 337.8,537.2 338.5,538.1 C339.2,539.0 339.9,541.4 340.7,542.7 C341.5,544.0 342.3,546.3 343.1,546.0 C343.9,545.7 344.6,542.2 345.4,540.9 C346.1,539.6 346.8,539.3 347.6,538.1 C348.4,536.9 349.3,533.0 350.0,533.6 C350.7,534.2 351.0,538.3 351.6,541.8 C352.2,545.3 352.7,552.6 353.4,554.5 C354.1,556.4 355.0,553.6 355.8,553.2 C356.6,552.8 357.4,551.8 358.1,552.1 C358.9,552.4 359.5,553.4 360.3,555.0 C361.1,556.6 362.1,559.4 363.0,561.8 C363.9,564.2 365.0,570.1 365.8,569.6 C366.6,569.1 367.3,561.9 367.9,559.0 C368.5,556.1 368.8,553.9 369.4,552.1 C369.9,550.3 370.6,549.8 371.2,548.1 C371.8,546.4 372.2,543.5 372.7,541.8 C373.2,540.0 373.6,536.9 374.1,537.6 C374.6,538.4 375.2,543.9 375.7,546.3 C376.2,548.7 376.4,551.1 377.0,552.1 C377.6,553.1 378.7,550.3 379.4,552.1 C380.1,553.9 380.6,559.6 381.2,562.7 C381.8,565.8 382.4,568.4 383.0,570.8 C383.6,573.2 384.1,574.9 384.8,577.2 C385.5,579.5 386.4,584.6 387.2,584.8 C388.0,584.9 388.7,580.9 389.4,578.1 C390.1,575.3 390.8,571.4 391.5,568.1 C392.2,564.8 392.8,560.5 393.4,558.1 C394.0,555.7 394.4,555.1 395.0,553.6 C395.6,552.1 396.2,551.3 396.9,549.0 C397.6,546.7 398.5,542.9 399.4,540.0 C400.3,537.1 401.4,534.8 402.3,531.8 C403.2,528.8 403.8,524.2 404.5,521.8 C405.2,519.4 405.9,518.5 406.7,517.3 C407.5,516.1 408.4,514.7 409.1,514.5 C409.8,514.3 410.3,514.6 410.9,516.3 C411.5,518.0 412.1,525.4 412.7,524.5 C413.3,523.6 414.0,514.1 414.5,510.9 C415.0,507.7 415.2,507.3 415.6,505.4 C416.1,503.5 416.5,500.6 417.2,499.5 C417.9,498.4 419.2,498.5 420.0,498.9 C420.8,499.3 421.2,500.6 421.8,501.7 C422.4,502.8 423.0,504.6 423.6,505.3 C424.2,506.1 424.8,507.7 425.4,506.2 C426.0,504.7 426.6,500.3 427.2,496.2 C427.8,492.1 428.4,485.7 429.0,481.7 C429.6,477.7 430.3,472.5 430.9,472.2 C431.5,471.9 432.1,476.2 432.7,479.9 C433.3,483.6 433.9,490.2 434.5,494.4 C435.1,498.6 435.7,504.1 436.3,504.9 C436.9,505.6 437.6,500.2 438.1,498.9 C438.6,497.6 438.9,496.6 439.4,497.1 C439.9,497.6 440.5,500.5 441.2,501.7 C441.9,502.9 443.0,503.3 443.6,504.4 C444.2,505.4 444.4,505.7 444.7,508.0 C445.0,510.3 445.0,514.9 445.4,518.2 C445.8,521.6 446.3,528.1 446.8,528.1 C447.3,528.1 448.0,521.7 448.5,518.2 C449.0,514.7 449.5,508.8 449.9,507.3 C450.3,505.8 450.5,509.6 451.0,509.3 C451.5,509.0 452.1,507.2 452.7,505.3 C453.3,503.4 453.8,499.7 454.5,498.0 C455.2,496.3 456.1,495.3 456.8,495.3 C457.6,495.3 458.3,496.6 459.0,498.0 C459.7,499.4 460.2,502.3 460.8,503.5 C461.4,504.7 461.8,505.9 462.3,505.3 C462.9,504.7 463.5,502.8 464.1,499.8 C464.7,496.8 465.3,491.6 465.9,487.1 C466.5,482.6 467.1,477.7 467.7,472.6 C468.3,467.5 468.9,461.3 469.5,456.3 C470.1,451.3 470.8,445.6 471.4,442.6 C472.0,439.6 472.6,438.2 473.2,438.1 C473.8,438.0 474.4,442.6 475.0,441.7 C475.6,440.8 476.2,436.1 476.8,432.6 C477.4,429.1 478.0,424.5 478.6,420.8 C479.2,417.1 479.8,410.9 480.4,410.5 C481.0,410.1 481.8,416.3 482.3,418.1 C482.8,419.9 483.0,422.0 483.5,421.4 C484.0,420.8 484.7,416.7 485.3,414.5 C485.9,412.3 486.6,410.2 487.2,408.1 C487.8,406.0 488.5,405.9 489.0,401.8 C489.5,397.7 489.8,387.6 490.2,383.6 C490.6,379.6 490.9,376.3 491.3,377.8 C491.7,379.3 492.1,387.5 492.6,392.7 C493.1,397.9 493.8,405.1 494.4,409.0 C494.9,412.9 495.4,416.3 495.9,416.3 C496.4,416.3 497.0,412.6 497.5,409.0 C498.0,405.4 498.4,399.3 499.0,394.5 C499.6,389.7 500.2,384.2 500.8,380.0 C501.4,375.8 502.0,372.1 502.6,369.1 C503.2,366.1 503.8,361.5 504.4,361.8 C505.0,362.1 505.6,371.3 506.2,370.9 C506.8,370.4 507.5,362.1 508.1,359.1 C508.7,356.2 509.0,354.3 509.6,353.2 C510.2,352.1 511.0,352.9 511.8,352.7 C512.6,352.5 513.6,351.9 514.5,351.8 C515.4,351.7 516.2,350.3 516.9,351.8 C517.6,353.3 517.9,357.7 518.5,360.9 C519.1,364.1 519.7,368.4 520.3,370.9 C520.9,373.4 521.4,376.4 522.1,375.8 C522.8,375.2 523.7,367.8 524.5,367.2 C525.3,366.6 526.1,373.2 526.9,372.1 C527.6,371.1 528.3,363.8 529.0,360.9 C529.7,358.0 530.3,355.4 530.9,354.5 C531.5,353.6 532.1,354.0 532.7,355.4 C533.3,356.8 533.8,360.4 534.5,362.7 C535.2,365.0 536.0,367.6 536.7,369.0 C537.4,370.4 537.9,371.0 538.5,370.9 C539.1,370.8 539.7,367.1 540.3,368.1 C540.9,369.2 541.5,372.9 542.1,377.2 C542.7,381.4 543.4,388.5 543.9,393.6 C544.4,398.8 545.0,404.8 545.4,408.1 C545.8,411.4 545.8,413.1 546.3,413.5 C546.8,413.9 547.5,410.2 548.1,410.8 C548.7,411.4 549.4,415.6 549.9,417.2 C550.4,418.8 550.7,420.7 551.2,420.4 C551.7,420.1 552.4,415.6 553.0,415.4 C553.6,415.2 554.2,417.8 554.8,419.0 C555.3,420.2 555.7,422.6 556.3,422.6 C556.9,422.6 557.8,418.4 558.5,419.0 C559.2,419.6 560.0,423.7 560.8,426.3 C561.6,428.9 562.4,433.9 563.2,434.4 C564.0,434.8 564.7,431.0 565.4,429.0 C566.1,427.0 566.8,424.0 567.5,422.6 C568.2,421.2 569.1,420.2 569.9,420.4 C570.7,420.5 571.4,422.0 572.1,423.5 C572.8,425.0 573.3,429.6 573.9,429.5 C574.5,429.4 575.2,424.1 575.7,422.6 C576.2,421.2 576.4,419.3 576.8,420.8 C577.2,422.3 577.6,428.7 578.1,431.7 C578.6,434.7 579.0,438.3 579.5,438.6 C580.0,438.9 580.7,436.2 581.3,433.5 C581.9,430.8 582.7,424.9 583.2,422.6 C583.7,420.3 584.0,419.0 584.4,419.9 C584.8,420.8 585.4,424.9 585.9,428.1 C586.4,431.3 586.9,436.0 587.5,439.0 C588.1,442.0 588.7,443.8 589.3,446.2 C589.9,448.6 590.5,451.7 591.1,453.5 C591.7,455.3 592.0,457.4 592.6,457.1 C593.2,456.9 594.0,451.4 594.8,452.0 C595.5,452.6 596.4,460.1 597.1,460.4 C597.9,460.7 598.5,454.8 599.3,453.9 C600.1,453.0 601.1,454.9 601.7,455.3 C602.3,455.7 602.6,456.6 603.1,456.2 C603.6,455.8 604.4,452.6 604.9,452.6 C605.4,452.6 605.7,454.8 606.2,456.2 C606.7,457.6 607.3,461.2 608.0,461.1 C608.7,461.0 609.6,455.8 610.4,455.3 C611.2,454.8 611.9,458.3 612.6,458.0 C613.3,457.7 614.2,454.7 614.8,453.5 C615.4,452.3 615.7,450.4 616.2,450.8 C616.7,451.2 617.4,456.7 618.0,456.2 C618.6,455.7 619.2,450.1 619.8,448.0 C620.4,445.9 621.1,444.2 621.7,443.5 C622.3,442.8 622.9,442.3 623.5,443.5 C624.1,444.7 624.8,449.1 625.3,450.8 C625.8,452.5 625.9,454.6 626.4,453.5 C626.9,452.4 627.4,446.5 628.0,444.4 C628.6,442.3 629.2,441.1 629.8,440.8 C630.4,440.5 631.0,441.2 631.6,442.6 C632.2,444.0 632.9,446.9 633.5,449.0 C634.1,451.1 634.8,453.9 635.3,455.3 C635.8,456.7 636.0,457.5 636.5,457.5 C637.0,457.5 637.8,455.7 638.4,455.3 C639.0,454.9 639.5,454.6 640.0,455.3 C640.5,456.0 640.8,458.5 641.4,459.6 C642.0,460.7 642.9,461.8 643.6,461.7 C644.3,461.6 645.0,459.5 645.8,459.0 C646.5,458.5 647.4,458.5 648.1,458.5 C648.8,458.5 649.3,459.7 649.9,459.0 C650.5,458.3 651.2,456.6 651.8,454.5 C652.4,452.4 653.1,448.1 653.6,446.3 C654.1,444.6 654.3,444.1 654.8,444.0 C655.3,443.9 656.1,446.4 656.7,445.8 C657.3,445.2 657.9,441.5 658.5,440.3 C659.1,439.1 659.7,438.4 660.3,438.5 C660.9,438.6 661.5,439.6 662.1,440.9 C662.7,442.2 663.1,444.9 663.6,446.3 C664.1,447.7 664.5,449.6 665.0,449.0 C665.5,448.4 666.2,445.7 666.8,442.7 C667.4,439.7 668.0,435.3 668.6,430.9 C669.2,426.5 670.0,420.2 670.5,416.3 C671.0,412.4 671.3,409.7 671.7,407.3 C672.1,404.9 672.5,402.7 673.0,401.8 C673.5,400.9 674.3,402.7 675.0,402.2 C675.7,401.7 676.5,401.4 677.2,399.0 C677.9,396.6 678.4,391.7 679.0,388.1 C679.6,384.5 680.2,379.8 680.9,377.2 C681.6,374.6 682.2,373.8 683.0,372.6 C683.8,371.5 684.5,371.2 685.4,370.3 C686.2,369.4 687.3,368.3 688.1,367.2 C688.9,366.1 689.7,363.2 690.3,363.6 C690.9,364.1 691.2,367.2 691.7,369.9 C692.2,372.6 692.9,379.0 693.6,379.9 C694.3,380.8 695.1,378.6 695.7,375.4 C696.3,372.2 696.7,365.4 697.2,360.8 C697.7,356.2 698.0,351.0 698.6,348.1 C699.2,345.2 700.2,346.0 700.8,343.6 C701.4,341.2 701.8,336.5 702.3,333.6 C702.8,330.7 703.4,326.9 703.9,326.3 C704.4,325.7 704.8,327.3 705.4,330.0 C706.0,332.7 706.6,338.7 707.2,342.7 C707.8,346.7 708.5,353.9 709.0,353.9 C709.5,353.9 710.0,346.2 710.5,342.7 C711.0,339.2 711.2,334.5 711.7,332.7 C712.2,330.9 712.8,331.7 713.2,332.1 C713.7,332.6 714.0,330.3 714.4,335.4 C714.8,340.5 715.1,353.8 715.4,362.6 C715.7,371.4 715.9,381.6 716.3,388.1 C716.6,394.6 717.0,401.1 717.5,401.7 C718.0,402.3 718.5,396.7 719.0,391.7 C719.5,386.7 719.9,378.0 720.3,371.7 C720.7,365.4 721.0,357.8 721.4,353.6 C721.8,349.4 722.1,347.1 722.6,346.7 C723.1,346.3 723.7,350.9 724.4,351.4 C725.1,351.9 725.8,350.7 726.6,349.9 C727.4,349.1 728.3,346.8 729.0,346.7 C729.7,346.6 730.2,347.6 730.8,349.0 C731.4,350.4 731.9,353.4 732.6,355.4 C733.3,357.4 734.2,360.1 735.0,361.2 C735.8,362.2 736.5,361.1 737.2,361.7 C737.9,362.3 738.5,364.0 739.3,364.8 C740.1,365.6 741.3,366.6 742.2,366.6 C743.1,366.6 744.1,366.1 744.8,364.8 C745.5,363.5 746.0,362.1 746.6,359.0 C747.2,355.9 747.9,350.8 748.4,346.3 C748.9,341.8 749.4,336.3 749.9,331.8 C750.4,327.3 750.8,322.3 751.3,319.1 C751.8,315.9 752.5,313.0 753.1,312.7 C753.7,312.4 754.1,315.8 754.6,317.2 C755.1,318.6 755.5,321.5 756.0,320.9 C756.5,320.3 757.0,315.0 757.7,313.6 C758.4,312.2 759.6,313.9 760.4,312.7 C761.1,311.5 761.6,308.7 762.2,306.3 C762.8,303.9 763.4,300.0 764.0,298.2 C764.6,296.4 765.3,295.8 765.8,295.4 C766.3,295.0 766.3,294.3 766.8,295.8 C767.3,297.3 768.0,301.9 768.6,304.5 C769.2,307.1 769.8,310.5 770.4,311.7 C771.0,312.9 771.6,312.9 772.2,311.7 C772.8,310.5 773.4,305.9 774.0,304.5 C774.6,303.1 775.3,303.0 775.9,303.6 C776.5,304.2 777.1,306.1 777.7,308.1 C778.3,310.1 778.9,313.5 779.5,315.4 C780.1,317.3 780.7,319.8 781.3,319.4 C781.9,318.9 782.6,314.8 783.1,312.7 C783.6,310.6 783.9,307.4 784.4,306.7 C784.9,306.0 785.4,308.2 785.9,308.5 C786.4,308.8 786.8,310.4 787.3,308.5 C787.8,306.6 788.5,301.9 789.1,297.2 C789.7,292.4 790.3,284.1 790.9,280.0 C791.5,275.9 792.1,273.5 792.6,272.7 C793.1,271.9 793.5,274.8 794.0,275.4 C794.5,276.0 795.2,276.6 795.8,276.3 C796.4,276.0 797.2,271.3 797.7,273.6 C798.2,275.9 798.5,285.1 798.9,290.0 C799.3,294.9 799.9,302.6 800.4,302.7 C800.9,302.8 801.3,293.6 801.7,290.9 C802.1,288.2 802.2,286.1 802.7,286.3 C803.2,286.5 803.9,288.2 804.4,291.8 C804.9,295.4 805.3,302.1 805.8,308.1 C806.2,314.2 806.7,323.0 807.1,328.1 C807.5,333.2 807.7,337.4 808.2,339.0 C808.8,340.6 809.7,336.9 810.4,337.5 C811.1,338.1 811.6,341.2 812.2,342.6 C812.8,344.0 813.4,345.4 814.0,345.9 C814.6,346.3 815.2,344.9 815.8,345.3 C816.4,345.7 817.0,347.2 817.6,348.1 C818.2,349.0 818.8,350.1 819.4,350.8 C820.0,351.6 820.7,352.3 821.3,352.6 C821.9,352.9 822.4,352.8 823.1,352.6 C823.9,352.5 825.3,351.9 825.8,351.7" fill="none" stroke="#0B330B" stroke-width="2" stroke-linejoin="round" stroke-linecap="round"/>
<text class="sa" x="836.3" y="356.2" font-size="10.6" fill="#000" stroke="#000" stroke-width="0.2" textLength="44.0" lengthAdjust="spacingAndGlyphs" xml:space="preserve">$91,229</text>
<text class="sa" x="836.3" y="478.9" font-size="10.6" fill="#000" stroke="#000" stroke-width="0.2" textLength="44.0" lengthAdjust="spacingAndGlyphs" xml:space="preserve">$75,972</text>
<text class="sa" x="836.3" y="579.6" font-size="10.6" fill="#000" stroke="#000" stroke-width="0.2" textLength="44.6" lengthAdjust="spacingAndGlyphs" xml:space="preserve">$63,460</text>
<text class="sa" x="836.3" y="645.8" font-size="10.6" fill="#000" stroke="#000" stroke-width="0.2" textLength="44.6" lengthAdjust="spacingAndGlyphs" xml:space="preserve">$55,200</text>
<rect x="161.5" y="294.5" width="306" height="93" fill="#b0b0b0" opacity="0.55"/>
<rect x="159.5" y="292.5" width="305.5" height="92.5" fill="#fff" stroke="#000" stroke-width="1" shape-rendering="crispEdges"/>
<line x1="168" y1="304" x2="204" y2="304" stroke="#0B330B" stroke-width="2.2"/>
<line x1="168" y1="327" x2="204" y2="327" stroke="#0F75C5" stroke-width="2.2" stroke-dasharray="6 2"/>
<line x1="168" y1="350.9" x2="204" y2="350.9" stroke="#5F497A" stroke-width="2.2" stroke-dasharray="6 2"/>
<line x1="168" y1="373.9" x2="204" y2="373.9" stroke="#E36C09" stroke-width="2.2" stroke-dasharray="6 2"/>
<text class="sa" x="213.4" y="307.8" font-size="10.6" fill="#000" stroke="#000" stroke-width="0.2" textLength="144.9" lengthAdjust="spacingAndGlyphs" xml:space="preserve">The Dual Momentum Fund</text>
<text class="sa" x="213.4" y="331.0" font-size="10.6" fill="#000" stroke="#000" stroke-width="0.2" textLength="182.9" lengthAdjust="spacingAndGlyphs" xml:space="preserve">All Ordinaries Accumulation Index</text>
<text class="sa" x="213.4" y="354.2" font-size="10.6" fill="#000" stroke="#000" stroke-width="0.2" textLength="243.4" lengthAdjust="spacingAndGlyphs" xml:space="preserve">Fixed Interest (S&amp;P Aust Fixed Interest Index)</text>
<text class="sa" x="213.4" y="377.5" font-size="10.6" fill="#000" stroke="#000" stroke-width="0.2" textLength="17.0" lengthAdjust="spacingAndGlyphs" xml:space="preserve">CPI</text>
<text class="sa b" font-style="italic" x="146" y="800.1" font-size="13.1" fill="#000" textLength="97.9" lengthAdjust="spacingAndGlyphs" xml:space="preserve">Value of $50,000</text>
<text class="sa b" font-style="italic" x="251.6" y="800.1" font-size="13.1" fill="#000" textLength="241.2" lengthAdjust="spacingAndGlyphs" xml:space="preserve">invested since inception (net of all fees).</text>
<text class="sa b" font-style="italic" x="508" y="800.1" font-size="13.1" fill="#000" textLength="221.7" lengthAdjust="spacingAndGlyphs" xml:space="preserve">Assumes distributions are reinvested</text>
</g>
</svg>
</body></html>
